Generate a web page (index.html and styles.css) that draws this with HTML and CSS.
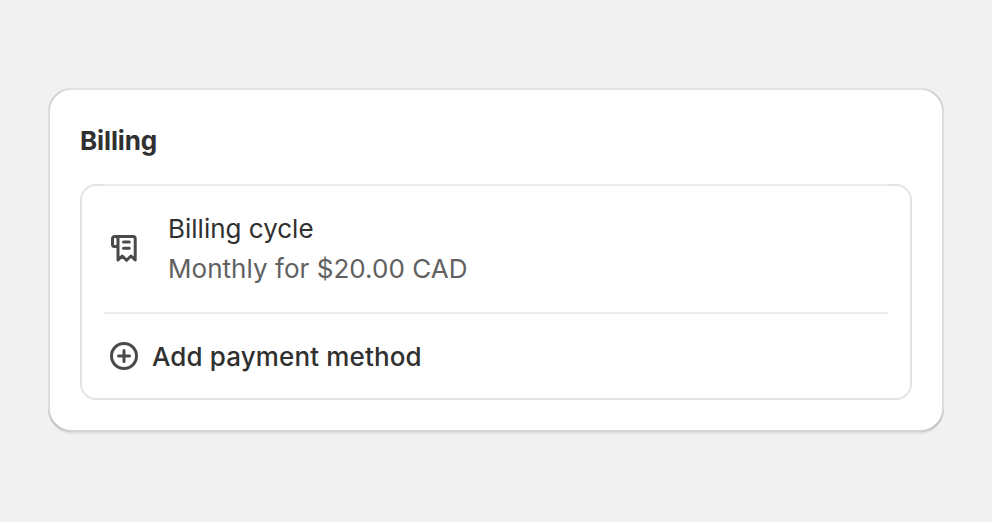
FILE: index.html
```html
<!DOCTYPE html>
<html lang="en">
<head>
<meta charset="utf-8">
<title>Billing</title>
<link rel="stylesheet" href="styles.css">
</head>
<body>
<main class="card">
  <h2 class="title">Billing</h2>
  <section class="panel">
    <div class="cycle">
      <svg class="icon" viewBox="0 0 40 40" fill="none" stroke="#4a4a4a" stroke-width="3" stroke-linejoin="round" stroke-linecap="round">
        <path d="M14 18.500H10.500a2 2 0 0 1-2-2V11a2.500 2.500 0 0 1 2.500-2.500H29.200a2 2 0 0 1 2 2V32L27 28 22.600 32.300 18.200 28 14 32V11a2.500 2.500 0 0 0-2.500-2.500"/>
        <path d="M19.500 14h5.800M19.500 20.300h5.800"/>
      </svg>
      <div class="details">
        <div class="name">Billing cycle</div>
        <div class="price">Monthly for $20.00 CAD</div>
      </div>
    </div>
    <div class="add">
      <svg class="icon" viewBox="0 0 40 40" fill="none" stroke="#4a4a4a" stroke-width="3" stroke-linecap="round">
        <circle cx="20" cy="20" r="12.500"/>
        <path d="M20 14.500v11M14.500 20h11"/>
      </svg>
      <span>Add payment method</span>
    </div>
  </section>
</main>
</body>
</html>
```
FILE: styles.css
```css
* { box-sizing: border-box; }
body { margin: 0; padding: 88px 48px; height: 522px; background: #f1f1f1; font-family: Inter, sans-serif; font-size: 26px; line-height: 40px; color: #303030; }
.card {
  height: 344px;
  padding: 33px 32px 32px;
  background: #fff;
  border-radius: 24px;
  box-shadow:
    0 2px 0 rgba(26, 26, 26, .07),
    inset 2px 0 0 rgba(0, 0, 0, .13),
    inset -2px 0 0 rgba(0, 0, 0, .13),
    inset 0 -2px 0 rgba(0, 0, 0, .17),
    inset 0 2px 0 rgba(204, 204, 204, .5);
}
.title { margin: 0 0 23px; font-size: 26px; font-weight: 650; line-height: 40px; letter-spacing: -.12px; }
.panel { height: 216px; border: 2px solid #e3e3e3; border-radius: 16px; padding: 0 22px; }
.cycle { height: 130px; margin-top: -2px; border: solid #ebebeb; border-width: 2px 0; display: flex; align-items: center; gap: 24px; }
.add { display: flex; align-items: center; gap: 8px; height: 86px; font-weight: 550; letter-spacing: .13px; }
.icon { width: 40px; height: 40px; margin-bottom: 2px; flex: none; }
.price { color: #616161; letter-spacing: .04px; }
```
